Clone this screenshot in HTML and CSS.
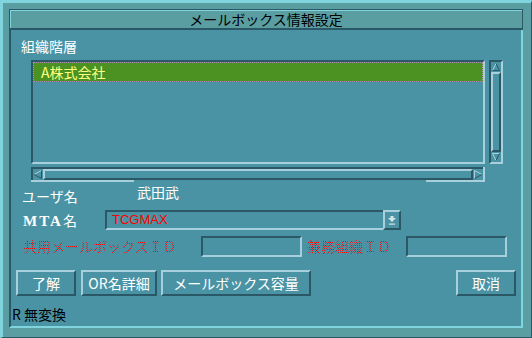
FILE: index.html
```html
<!DOCTYPE html>
<html lang="ja">
<head>
    <meta charset="UTF-8">
    <title>メールボックス情報設定</title>
    <link rel="stylesheet" href="styles.css">
</head>
<body>

<div class="window">
    <div class="title-bar">メールボックス情報設定</div>

    <div class="panel">
        <div class="section-label">組織階層</div>

        <div class="tree-area">
            <div class="tree-main">
                <div class="list-box">
                    <div class="list-item selected">A株式会社</div>
                </div>
                <div class="hscroll">
                    <span class="arrow-btn">
                        <svg width="10" height="11" viewBox="0 0 10 11">
                            <path d="M1 5.5 L8.5 1.5" stroke="#a8d0dc" fill="none"/>
                            <path d="M8.5 1.5 V9.5 L1 5.5" stroke="#2b5866" fill="none"/>
                        </svg>
                    </span>
                    <span class="hthumb"></span>
                    <span class="arrow-btn">
                        <svg width="10" height="11" viewBox="0 0 10 11">
                            <path d="M1.5 9.5 V1.5 L9 5.5" stroke="#a8d0dc" fill="none"/>
                            <path d="M1.5 9.5 L9 5.5" stroke="#2b5866" fill="none"/>
                        </svg>
                    </span>
                </div>
            </div>

            <div class="vscroll">
                <span class="arrow-btn">
                    <svg width="10" height="10" viewBox="0 0 10 10">
                        <path d="M5 1.5 L1.5 8.5" stroke="#a8d0dc" fill="none"/>
                        <path d="M1.5 8.5 H8.5 L5 1.5" stroke="#2b5866" fill="none"/>
                    </svg>
                </span>
                <span class="vthumb"></span>
                <span class="arrow-btn">
                    <svg width="10" height="10" viewBox="0 0 10 10">
                        <path d="M8.5 1.5 H1.5 L5 8.5" stroke="#a8d0dc" fill="none"/>
                        <path d="M8.5 1.5 L5 8.5" stroke="#2b5866" fill="none"/>
                    </svg>
                </span>
            </div>
        </div>

        <div class="user-row">
            <div class="user-label">ユーザ名</div>
            <div class="user-name">武田武</div>
        </div>

        <div class="mta-row">
            <div class="mta-label"><span class="latin">MTA</span>名</div>
            <div class="combo">
                <div class="combo-field">TCGMAX</div>
                <div class="combo-btn">
                    <svg width="8" height="9" viewBox="0 0 8 9">
                        <path d="M2.5 0 H5.5 V2 H8 L4 6 L0 2 H2.5 Z" fill="#d4e4ea"/>
                        <rect x="1" y="7.5" width="6" height="1.2" fill="#d4e4ea"/>
                    </svg>
                </div>
            </div>
        </div>

        <div class="id-row">
            <div class="stipple shared-label">共用メールボックスＩＤ</div>
            <div class="text-field"></div>
            <div class="stipple dept-label">兼務組織ＩＤ</div>
            <div class="text-field"></div>
        </div>

        <div class="button-row">
            <button class="btn btn-ok">了解</button>
            <button class="btn btn-or">OR名詳細</button>
            <button class="btn btn-size">メールボックス容量</button>
            <button class="btn btn-cancel">取消</button>
        </div>

        <div class="status">R 無変換</div>
    </div>
</div>

</body>
</html>
```

FILE: styles.css
```css
* {
    box-sizing: border-box;
    margin: 0;
    padding: 0;
}

body {
    width: 532px;
    height: 338px;
    overflow: hidden;
    background-color: #5a9ea2;
    font-family: "Noto Sans CJK JP", "Noto Sans", sans-serif;
    font-size: 14px;
    line-height: 16px;
    color: #fff;
}

.window {
    width: 532px;
    height: 338px;
    display: flex;
    flex-direction: column;
    padding: 6px 8px 9px 6px;
    border-top: 3px solid #7fd4de;
    border-left: 3px solid #7fd4de;
    border-right: 1px solid #2b5866;
    border-bottom: 1px solid #2b5866;
}

.title-bar {
    height: 21px;
    border: 1px solid #2b5866;
    border-bottom-width: 2px;
    box-shadow: inset 1px 1px 0 #7fd4de;
    color: #000;
    text-align: center;
    line-height: 18px;
}

.panel {
    flex: 1;
    display: flex;
    flex-direction: column;
    background-color: #4a93a4;
    border-left: 2px solid #2b5866;
    border-right: 2px solid #7fd4de;
    border-bottom: 2px solid #7fd4de;
}

.section-label {
    margin: 8px 0 0 10px;
}

/* дерево организаций */
.tree-area {
    display: flex;
    gap: 4px;
    margin: 6px 0 0 20px;
}

.tree-main {
    display: flex;
    flex-direction: column;
    gap: 3px;
    width: 454px;
}

.list-box {
    height: 104px;
    border: 2px solid;
    border-color: #2b5866 #a8d0dc #a8d0dc #2b5866;
}

.list-item {
    height: 20px;
    padding-left: 7px;
    line-height: 18px;
}

.list-item.selected {
    background-color: #4b9222;
    border: 1px dotted #b08cb0;
    color: #ffff80;
}

.arrow-btn {
    display: flex;
    align-items: center;
    justify-content: center;
}

.hscroll {
    display: flex;
    height: 15px;
    padding: 2px 0 0 2px;
    box-shadow: inset 2px 2px 0 #2b5866;
    border-right: 2px solid #a8d0dc;
    border-bottom: 2px solid #a8d0dc;
    border-image: linear-gradient(to right, #a8d0dc 105px, transparent 105px, transparent 395px, #a8d0dc 395px) 2;
}

.hscroll .arrow-btn {
    width: 10px;
}

.hthumb {
    flex: 1;
    border: 2px solid;
    border-color: #a8d0dc #2b5866 #2b5866 #a8d0dc;
}

.vscroll {
    display: flex;
    flex-direction: column;
    width: 14px;
    height: 104px;
    border: 2px solid;
    border-color: #2b5866 #a8d0dc #a8d0dc #2b5866;
}

.vscroll .arrow-btn {
    height: 10px;
}

.vthumb {
    flex: 1;
    border: 2px solid;
    border-color: #a8d0dc #2b5866 #2b5866 #a8d0dc;
}

/* поля формы */
.user-row {
    display: flex;
}

.user-label {
    width: 115px;
    margin: 6px 0 0 11px;
}

.user-name {
    margin-top: 2px;
}

.mta-row {
    display: flex;
    align-items: center;
    margin-top: 6px;
}

.mta-label {
    width: 82px;
    margin-left: 12px;
}

.mta-label .latin {
    font-family: "Liberation Serif", serif;
    font-weight: bold;
    font-size: 15px;
    letter-spacing: 2px;
}

.combo {
    display: flex;
}

.combo-field {
    width: 278px;
    height: 20px;
    padding-left: 5px;
    border-top: 2px solid #2b5866;
    border-left: 2px solid #2b5866;
    border-bottom: 2px solid #a8d0dc;
    font-family: "Liberation Sans", sans-serif;
    font-size: 13px;
    line-height: 16px;
    color: #ff0000;
}

.combo-btn {
    width: 18px;
    height: 20px;
    display: flex;
    align-items: center;
    justify-content: center;
    border: 2px solid;
    border-color: #a8d0dc #2b5866 #2b5866 #a8d0dc;
}

.id-row {
    display: flex;
    align-items: flex-start;
    margin-top: 6px;
}

.stipple {
    margin-top: 2px;
    color: transparent;
    background: repeating-conic-gradient(#ff0000 0 25%, transparent 0 50%) 0 0 / 2px 2px;
    -webkit-background-clip: text;
    background-clip: text;
}

.shared-label {
    width: 178px;
    margin-left: 12px;
}

.dept-label {
    width: 99px;
    margin-left: 5px;
}

.text-field {
    width: 101px;
    height: 21px;
    border: 2px solid;
    border-color: #2b5866 #a8d0dc #a8d0dc #2b5866;
}

/* кнопки */
.button-row {
    display: flex;
    margin-top: 13px;
}

.btn {
    height: 26px;
    background-color: transparent;
    border: 2px solid;
    border-color: #a8d0dc #2b5866 #2b5866 #a8d0dc;
    font-family: "Noto Sans CJK JP", "Noto Sans", sans-serif;
    font-size: 14px;
    line-height: 16px;
    color: #fff;
}

.btn-ok {
    width: 60px;
    margin-left: 5px;
}

.btn-or {
    width: 76px;
    margin-left: 5px;
}

.btn-size {
    width: 150px;
    margin-left: 4px;
}

.btn-cancel {
    width: 60px;
    margin-left: auto;
    margin-right: 5px;
}

.status {
    margin: 10px 0 0 1px;
    color: #000;
}
```
